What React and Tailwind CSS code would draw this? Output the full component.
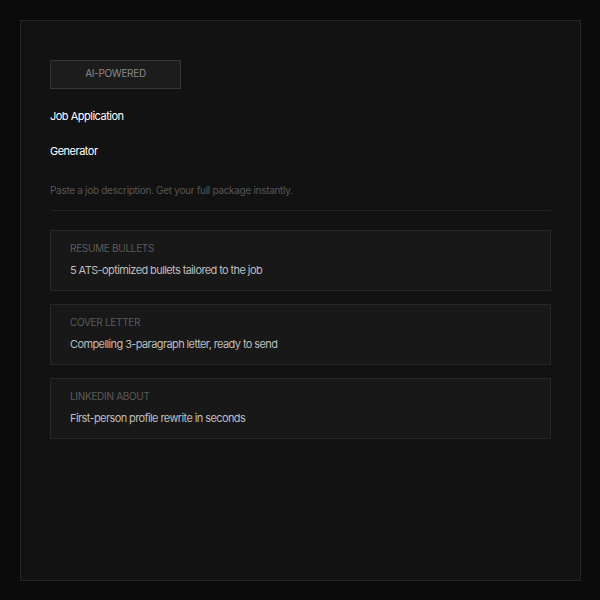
const features = [
    { label: "Resume Bullets", text: "5 ATS-optimized bullets tailored to the job" },
    { label: "Cover Letter", text: "Compelling 3-paragraph letter, ready to send" },
    { label: "LinkedIn About", text: "First-person profile rewrite in seconds" },
];

const App = () => {
    return (
        <div
            className="min-h-[600px] bg-[#0b0b0b] p-5"
            style={{ fontFamily: "Inter, 'Liberation Sans', sans-serif" }}
        >
            <div className="h-[561px] w-[561px] border border-[#262626] bg-[#121212] px-[29px] pt-[39px]">
                <div className="flex h-[29px] w-[131px] items-center justify-center border border-[#363636] bg-[#1c1c1c] pb-[3px] text-[10px] tracking-[-0.3px] text-[#8a8a8a]">
                    AI-POWERED
                </div>

                <h1 className="mt-[10px] w-[110px] text-[11px] leading-[35px] font-normal tracking-[-0.5px] text-white">
                    Job Application Generator
                </h1>

                <p className="mt-[14px] border-b border-[#232323] pb-[12px] text-[10px] tracking-[-0.3px] text-[#575757]">
                    Paste a job description. Get your full package instantly.
                </p>

                <div className="mt-[19px] flex flex-col gap-[13px]">
                    {features.map((f) => (
                        <div
                            key={f.label}
                            className="h-[61px] border border-[#272727] bg-[#181818] px-[19px] pt-[10px]"
                        >
                            <div className="text-[10px] uppercase tracking-[-0.3px] text-[#5a5a5a]">
                                {f.label}
                            </div>
                            <div className="mt-[6px] text-[11px] tracking-[-0.6px] text-[#bdbdbd]">
                                {f.text}
                            </div>
                        </div>
                    ))}
                </div>
            </div>
        </div>
    );
};

export default App;
